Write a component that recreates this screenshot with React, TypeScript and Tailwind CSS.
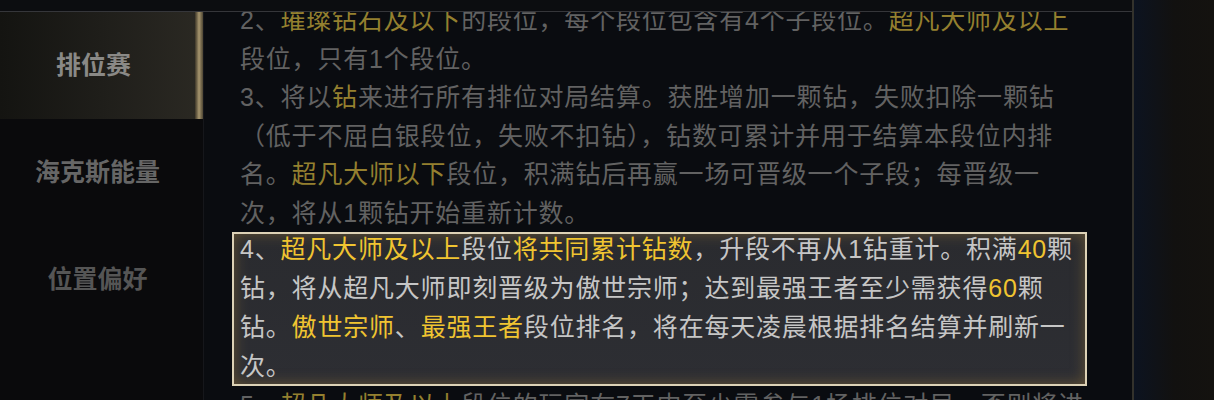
import React from "react";

type Seg = [string, boolean?];

const dimLines: Seg[][] = [
  [["2、"], ["璀璨钻石及以下", true], ["的段位，每个段位包含有4个子段位。"], ["超凡大师及以上", true]],
  [["段位，只有1个段位。"]],
  [["3、将以"], ["钻", true], ["来进行所有排位对局结算。获胜增加一颗钻，失败扣除一颗钻"]],
  [["（低于不屈白银段位，失败不扣钻），钻数可累计并用于结算本段位内排"]],
  [["名。"], ["超凡大师以下", true], ["段位，积满钻后再赢一场可晋级一个子段；每晋级一"]],
  [["次，将从1颗钻开始重新计数。"]],
];

const boxLines: Seg[][] = [
  [["4、"], ["超凡大师及以上", true], ["段位"], ["将共同累计钻数", true], ["，升段不再从1钻重计。积满"], ["40", true], ["颗"]],
  [["钻，将从超凡大师即刻晋级为傲世宗师；达到最强王者至少需获得"], ["60", true], ["颗"]],
  [["钻。"], ["傲世宗师", true], ["、"], ["最强王者", true], ["段位排名，将在每天凌晨根据排名结算并刷新一"]],
  [["次。"]],
];

const tailLines: Seg[][] = [
  [["5、"], ["超凡大师及以上", true], ["段位的玩家在7天内至少需参与1场排位对局，否则将进"]],
];

const Line = ({ segs, gold, base }: { segs: Seg[]; gold: string; base: string }) => (
  <div className={`whitespace-nowrap ${base}`}>
    {segs.map(([t, g], i) => (
      <span key={i} className={g ? gold : ""}>
        {t}
      </span>
    ))}
  </div>
);

const SideItem = ({ label, active, tone }: { label: string; active?: boolean; tone: string }) => (
  <div
    className={`flex h-[107px] items-center ${
      active ? "bg-gradient-to-r from-[#141411] via-[#1f1e1a] to-[#2b2923]" : ""
    }`}
  >
    <div className={`flex-1 pr-[8px] text-center text-[25px] font-bold ${tone}`}>{label}</div>
    {active && (
      <div className="h-full w-[8px] bg-gradient-to-r from-[#3d3628] via-[#a8976f] to-[#4e4633]" />
    )}
  </div>
);

export default function App() {
  return (
    <div
      className="flex h-[400px] w-[1214px] overflow-hidden bg-[#0a0b0e]"
      style={{ fontFamily: '"Liberation Sans", "Noto Sans CJK SC", sans-serif' }}
    >
      <div className="flex w-[1132px] flex-col">
        <div className="relative z-10 h-[12px] shrink-0 border-b border-[#35363a] bg-[#0c0d10]" />
        <div className="flex flex-1 overflow-hidden">
          <div className="w-[204px] shrink-0 border-r border-[#16171b] bg-[#0a0a0c]">
            <SideItem label="排位赛" active tone="text-[#8a8986]" />
            <SideItem label="海克斯能量" tone="text-[#666666]" />
            <SideItem label="位置偏好" tone="text-[#555555]" />
          </div>
          <div className="flex-1 overflow-hidden bg-[#0a0c10] pl-[36px]">
            <div className="-mt-[11px] text-[25px] leading-[38.5px] tracking-[0.8px]">
              {dimLines.map((l, i) => (
                <Line key={i} segs={l} base="text-[#626262]" gold="text-[#94802f]" />
              ))}
              <div className="-ml-[8px] h-[154px] w-[855px] border-2 border-[#ddd2b6] bg-gradient-to-b from-[#2a2b2f] to-[#2d2e33] pl-[6px] shadow-[inset_0_0_14px_rgba(120,96,52,0.75)]">
                <div className="-mt-[4px] leading-[39px]">
                  {boxLines.map((l, i) => (
                    <Line key={i} segs={l} base="text-[#c6c6c6]" gold="text-[#f0c431]" />
                  ))}
                </div>
              </div>
              {tailLines.map((l, i) => (
                <Line key={i} segs={l} base="text-[#626262]" gold="text-[#94802f]" />
              ))}
            </div>
          </div>
        </div>
      </div>
      <div className="flex-1 border-l-2 border-[#33322c] bg-gradient-to-r from-[#0c1320] via-[#121110] to-[#14120f]" />
    </div>
  );
}
